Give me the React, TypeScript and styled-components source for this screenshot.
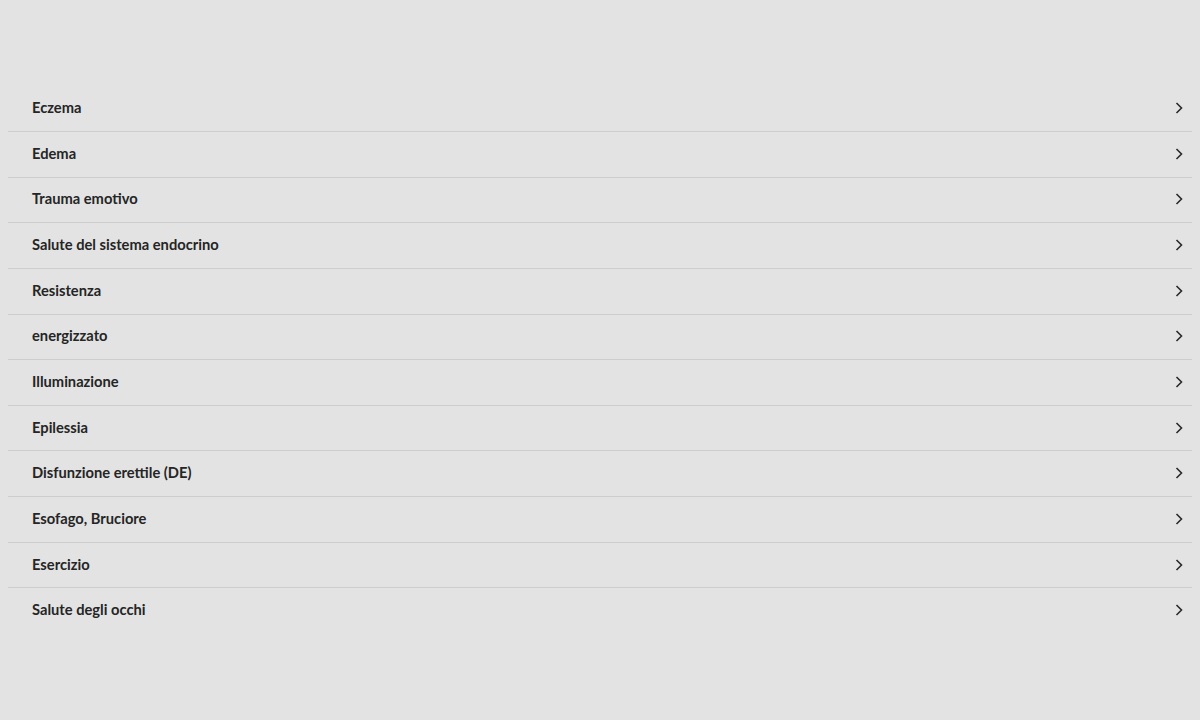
import React from 'react'
import styled, { createGlobalStyle } from 'styled-components'

const GlobalStyle = createGlobalStyle`
    html, body {
        margin: 0;
        padding: 0;
        background: #e3e3e3;
    }
    body {
        font-family: Lato, "Noto Sans", sans-serif;
        color: #222;
    }
`

const Page = styled.div`
    width: 1200px;
    height: 720px;
    background: #e3e3e3;
    padding: 86.3px 8px 0;
    box-sizing: border-box;
`

const List = styled.ul`
    list-style: none;
    margin: 0;
    padding: 0;
`

const Row = styled.li<{ $last?: boolean }>`
    display: flex;
    align-items: center;
    justify-content: space-between;
    height: 45.65px;
    padding: 0 9px 3px 24px;
    box-sizing: border-box;
    border-bottom: 1px solid ${p => (p.$last ? 'transparent' : '#cdcdcd')};
    cursor: pointer;
`

const Label = styled.span`
    font-size: 14.7px;
    font-weight: 700;
    color: #252525;
`

const ChevronIcon = styled.svg`
    margin-top: 2px;
    flex-shrink: 0;
`

const Chevron = () => (
    <ChevronIcon width="8" height="12" viewBox="0 0 8 12">
        <polyline points="1.5,1 6.5,6 1.5,11" fill="none" stroke="#2a2a2a" strokeWidth="1.6" />
    </ChevronIcon>
)

const items = [
    'Eczema',
    'Edema',
    'Trauma emotivo',
    'Salute del sistema endocrino',
    'Resistenza',
    'energizzato',
    'Illuminazione',
    'Epilessia',
    'Disfunzione erettile (DE)',
    'Esofago, Bruciore',
    'Esercizio',
    'Salute degli occhi',
]

export default function App() {
    return (
        <Page>
            <GlobalStyle />
            <List>
                {items.map((t, i) => (
                    <Row key={t} $last={i === items.length - 1}>
                        <Label>{t}</Label>
                        <Chevron />
                    </Row>
                ))}
            </List>
        </Page>
    )
}
